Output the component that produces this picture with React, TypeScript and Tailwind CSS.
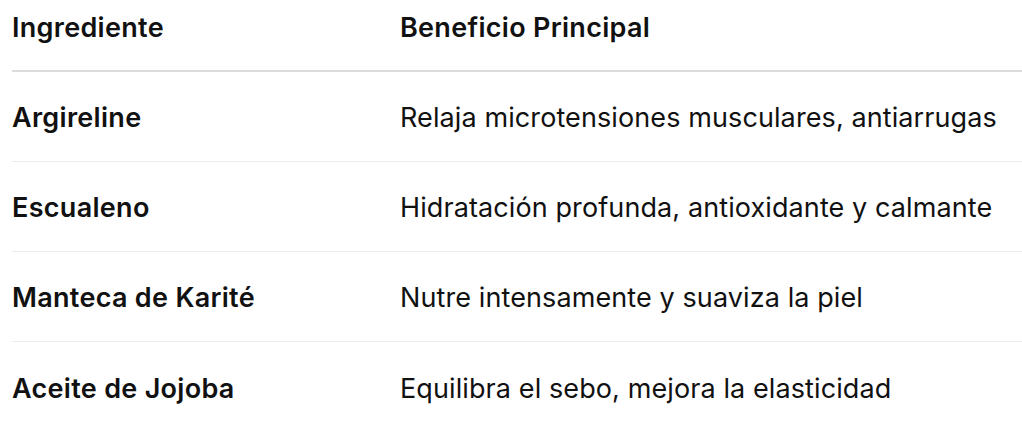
import React from "react";

const rows = [
  ["Argireline", "Relaja microtensiones musculares, antiarrugas"],
  ["Escualeno", "Hidratación profunda, antioxidante y calmante"],
  ["Manteca de Karité", "Nutre intensamente y suaviza la piel"],
  ["Aceite de Jojoba", "Equilibra el sebo, mejora la elasticidad"],
];

export default function App() {
  return (
    <div className="w-[1022px] h-[440px] bg-white overflow-hidden pl-3 text-[#111] font-['Inter',sans-serif] text-[27px]">
      <div className="flex h-[72px] pt-[10px] items-start border-b-2 border-[#dcdcdc]">
        <div className="w-[388px] font-semibold leading-[36px] tracking-[0.3px]">Ingrediente</div>
        <div className="flex-1 font-semibold leading-[36px] tracking-[0.3px]">Beneficio Principal</div>
      </div>
      {rows.map(([a, b], i) => (
        <div
          key={a}
          className={`flex items-center h-[90px] pt-[4px] ${i < rows.length - 1 ? "border-b border-[#ececec]" : ""}`}
        >
          <div className="w-[388px] font-semibold tracking-[0.3px]">{a}</div>
          <div className="flex-1 whitespace-nowrap tracking-[0.1px]">{b}</div>
        </div>
      ))}
    </div>
  );
}
